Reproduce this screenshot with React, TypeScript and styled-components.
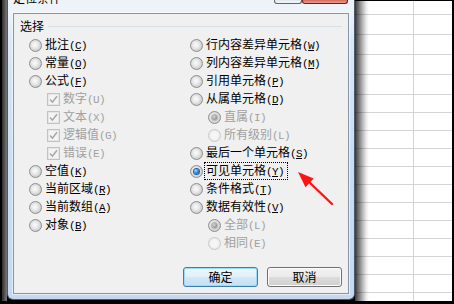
import React from 'react';
import styled, { createGlobalStyle } from 'styled-components';

const Global = createGlobalStyle`
  html, body { margin: 0; padding: 0; background: #000; }
  body {
    width: 454px; height: 304px; overflow: hidden;
    font-family: "Noto Sans CJK SC", "Noto Sans", sans-serif;
  }
`;

const Screen = styled.div`
  width: 454px;
  height: 304px;
  box-sizing: border-box;
  padding: 0 2px 3px 2px;
  background: #000;
  display: flex;
  align-items: flex-start;
`;

const LeftStrip = styled.div`
  width: 5px;
  height: 301px;
  flex: none;
  background: linear-gradient(to right, #2e2e2e, #5a5a5a 60%, #7a7a7a);
`;

const Frame = styled.div`
  width: 348px;
  height: 300px;
  flex: none;
  box-sizing: border-box;
  border: 1px solid #4a5868;
  border-top: none;
  border-radius: 0 0 6px 6px;
  background: linear-gradient(to bottom, #eef3f9 0, #eef3f9 13px, #dbe8f6 40px, #c9ddf3 160px, #c4d9f1 100%);
  padding: 0 5px 5px;
  display: flex;
  flex-direction: column;
`;

const TitleBar = styled.div`
  height: 13px;
  flex: none;
  display: flex;
  align-items: flex-start;
  overflow: hidden;
`;

const Title = styled.span`
  font-size: 12px;
  line-height: 12px;
  margin-top: -8px;
  color: #000;
  white-space: nowrap;
`;

const Caption = styled.div`
  margin-left: auto;
  margin-right: 1px;
  display: flex;
`;

const CaptionButton = styled.div<{ $close?: boolean }>`
  width: ${p => (p.$close ? 46 : 28)}px;
  height: 4px;
  box-sizing: border-box;
  border: 1px solid ${p => (p.$close ? '#6b1d17' : '#5d6672')};
  border-top: none;
  border-radius: 0 0 3px 3px;
  background: ${p => (p.$close ? 'linear-gradient(#d7675a, #e9a093)' : 'linear-gradient(#dfe6ee, #f4f7fa)')};
`;

const Client = styled.div`
  flex: 1;
  position: relative;
  border: 1px solid #8594a6;
  box-shadow: 0 0 0 1px rgba(255, 255, 255, 0.55);
  background: #f0f0f0;
  display: flex;
  flex-direction: column;
  padding: 6px;
`;

const Group = styled.div`
  display: flex;
  flex-direction: column;
`;

const GroupHeader = styled.div`
  display: flex;
  align-items: center;
  height: 12px;
`;

const GroupTitle = styled.span`
  font-size: 12px;
  line-height: 12px;
  color: #000;
`;

const GroupLine = styled.div`
  flex: 1;
  height: 1px;
  margin-left: 4px;
  background: #d5dfe5;
`;

const Options = styled.div`
  margin-top: 4px;
  padding-left: 9px;
  display: grid;
  grid-template-columns: 161px 1fr;
`;

const Column = styled.div`
  display: flex;
  flex-direction: column;
`;

const Row = styled.div<{ $indent?: boolean }>`
  height: 18px;
  display: flex;
  align-items: center;
  padding-left: ${p => (p.$indent ? 18 : 0)}px;
`;

const RadioDot = styled.span<{ $checked?: boolean; $disabled?: boolean }>`
  position: relative;
  flex: none;
  width: 13px;
  height: 13px;
  box-sizing: border-box;
  margin-right: 1px;
  border-radius: 50%;
  border: 1px solid ${p => (p.$disabled && !p.$checked ? '#c9c9c9' : '#8e8f8f')};
  background: ${p =>
    p.$disabled && !p.$checked
      ? 'radial-gradient(circle at 50% 50%, #f7f7f7 0, #f4f4f4 45%, #e6e6e6 80%, #eeeeee 100%)'
      : 'radial-gradient(circle at 45% 45%, #fbfbfb 0, #eeeeee 30%, #d4d4d4 62%, #c4c4c4 80%, #e2e2e2 100%)'};
  &::after {
    content: '';
    display: ${p => (p.$checked ? 'block' : 'none')};
    position: absolute;
    left: 3px;
    top: 3px;
    width: 5px;
    height: 5px;
    border-radius: 50%;
    background: ${p =>
      p.$disabled
        ? 'radial-gradient(circle at 40% 40%, #d8d8d8 0, #9d9d9d 55%, #7d7d7d 100%)'
        : 'radial-gradient(circle at 35% 35%, #a8e6ff 0, #2e8fdc 45%, #0b3a74 100%)'};
    box-shadow: ${p => (p.$disabled ? '0 0 0 1px #b5b5b5' : '0 0 0 1px #1f5f9e')};
  }
`;

const CheckBox = styled.span`
  flex: none;
  width: 13px;
  height: 13px;
  box-sizing: border-box;
  margin-right: 1px;
  border: 1px solid #c2c2c2;
  background: #f4f4f4;
  box-shadow: inset 0 0 0 1px #e6e6e6;
  display: flex;
  align-items: center;
  justify-content: center;
`;

const Label = styled.span<{ $disabled?: boolean; $focused?: boolean }>`
  font-size: 12px;
  line-height: 14px;
  color: ${p => (p.$disabled ? '#a0a0a0' : '#000')};
  border: 1px dotted ${p => (p.$focused ? '#000' : 'transparent')};
  padding: 0 3px 0 1px;
  white-space: nowrap;
`;

const Key = styled.span`
  font-family: "Liberation Mono", "DejaVu Sans Mono", monospace;
  font-size: 11px;
  letter-spacing: -0.6px;
`;

const KeyLetter = styled.span<{ $u?: boolean }>`
  text-decoration: ${p => (p.$u ? 'underline' : 'none')};
`;

const ButtonRow = styled.div`
  margin-top: auto;
  display: flex;
  justify-content: flex-end;
  gap: 9px;
`;

const Button = styled.button<{ $default?: boolean }>`
  width: 75px;
  height: 20px;
  padding: 0;
  box-sizing: border-box;
  border-radius: 3px;
  border: 1px solid ${p => (p.$default ? '#3c7fb1' : '#707070')};
  background: ${p =>
    p.$default
      ? 'linear-gradient(#eaf6fd 0%, #e0f0fa 50%, #d1e8f7 50%, #c4e1f4 100%)'
      : 'linear-gradient(#f2f2f2 0%, #ebebeb 50%, #dddddd 50%, #cfcfcf 100%)'};
  box-shadow: inset 0 0 0 1px ${p => (p.$default ? '#9fdaf6' : '#fcfcfc')};
  font-family: "Noto Sans CJK SC", "Noto Sans", sans-serif;
  font-size: 12px;
  line-height: 16px;
  color: #000;
`;

const Arrow = styled.svg`
  position: absolute;
  left: 282px;
  top: 156px;
`;

const Sheet = styled.div`
  flex: none;
  width: 97px;
  height: 301px;
  box-sizing: border-box;
  border-top: 1px solid #000;
  background: #fff;
  position: relative;
  overflow: hidden;
`;

const Shadow = styled.div`
  position: absolute;
  z-index: 2;
  left: 0;
  top: 0;
  bottom: 0;
  width: 14px;
  background: linear-gradient(
    to right,
    rgba(0, 0, 0, 0.78) 0,
    rgba(0, 0, 0, 0.55) 25%,
    rgba(0, 0, 0, 0.28) 55%,
    rgba(0, 0, 0, 0.08) 80%,
    rgba(0, 0, 0, 0) 100%
  );
`;

const SheetRow = styled.div<{ $h: number }>`
  height: ${p => p.$h}px;
  box-sizing: border-box;
  border-bottom: 1px solid #d4d4d4;
  display: grid;
  grid-template-columns: 59px 1fr;
`;

const Cell = styled.div`
  border-right: 1px solid #d4d4d4;
`;

type Opt = {
  kind: 'radio' | 'check';
  text: string;
  k: string;
  indent?: boolean;
  disabled?: boolean;
  checked?: boolean;
  focused?: boolean;
};

const leftOpts: Opt[] = [
  { kind: 'radio', text: '批注', k: 'C' },
  { kind: 'radio', text: '常量', k: 'O' },
  { kind: 'radio', text: '公式', k: 'F' },
  { kind: 'check', text: '数字', k: 'U', indent: true, disabled: true, checked: true },
  { kind: 'check', text: '文本', k: 'X', indent: true, disabled: true, checked: true },
  { kind: 'check', text: '逻辑值', k: 'G', indent: true, disabled: true, checked: true },
  { kind: 'check', text: '错误', k: 'E', indent: true, disabled: true, checked: true },
  { kind: 'radio', text: '空值', k: 'K' },
  { kind: 'radio', text: '当前区域', k: 'R' },
  { kind: 'radio', text: '当前数组', k: 'A' },
  { kind: 'radio', text: '对象', k: 'B' },
];

const rightOpts: Opt[] = [
  { kind: 'radio', text: '行内容差异单元格', k: 'W' },
  { kind: 'radio', text: '列内容差异单元格', k: 'M' },
  { kind: 'radio', text: '引用单元格', k: 'P' },
  { kind: 'radio', text: '从属单元格', k: 'D' },
  { kind: 'radio', text: '直属', k: 'I', indent: true, disabled: true, checked: true },
  { kind: 'radio', text: '所有级别', k: 'L', indent: true, disabled: true },
  { kind: 'radio', text: '最后一个单元格', k: 'S' },
  { kind: 'radio', text: '可见单元格', k: 'Y', checked: true, focused: true },
  { kind: 'radio', text: '条件格式', k: 'T' },
  { kind: 'radio', text: '数据有效性', k: 'V' },
  { kind: 'radio', text: '全部', k: 'L', indent: true, disabled: true, checked: true },
  { kind: 'radio', text: '相同', k: 'E', indent: true, disabled: true },
];

const sheetRows = [14, 20, 20, 20, 20, 18, 18, 18, 18, 18, 18, 18, 18, 18, 18, 18, 18];

function Option({ o }: { o: Opt }) {
  return (
    <Row $indent={o.indent}>
      {o.kind === 'radio' ? (
        <RadioDot $checked={o.checked} $disabled={o.disabled} />
      ) : (
        <CheckBox>
          <svg width="9" height="9" viewBox="0 0 9 9">
            <path d="M1 4.6 L3.4 7.2 L8 1.2" fill="none" stroke="#a6a6a6" strokeWidth="1.5" />
          </svg>
        </CheckBox>
      )}
      <Label $disabled={o.disabled} $focused={o.focused}>
        {o.text}
        <Key>
          (<KeyLetter $u={!o.disabled}>{o.k}</KeyLetter>)
        </Key>
      </Label>
    </Row>
  );
}

export default function App() {
  return (
    <>
      <Global />
      <Screen>
        <LeftStrip />
        <Frame>
          <TitleBar>
            <Title>定位条件</Title>
            <Caption>
              <CaptionButton />
              <CaptionButton $close />
            </Caption>
          </TitleBar>
          <Client>
            <Group>
              <GroupHeader>
                <GroupTitle>选择</GroupTitle>
                <GroupLine />
              </GroupHeader>
              <Options>
                <Column>
                  {leftOpts.map((o, i) => (
                    <Option key={i} o={o} />
                  ))}
                </Column>
                <Column>
                  {rightOpts.map((o, i) => (
                    <Option key={i} o={o} />
                  ))}
                </Column>
              </Options>
            </Group>
            <ButtonRow>
              <Button $default>确定</Button>
              <Button>取消</Button>
            </ButtonRow>
            <Arrow width="40" height="38" viewBox="0 0 40 38">
              <line x1="12" y1="11" x2="36" y2="34" stroke="#ff1414" strokeWidth="2.4" strokeLinecap="round" />
              <polygon points="2,2 9.5,17.3 17.7,8.5" fill="#ff1414" />
            </Arrow>
          </Client>
        </Frame>
        <Sheet>
          <Shadow />
          {sheetRows.map((h, i) => (
            <SheetRow key={i} $h={h}>
              <Cell />
              <div />
            </SheetRow>
          ))}
        </Sheet>
      </Screen>
    </>
  );
}
